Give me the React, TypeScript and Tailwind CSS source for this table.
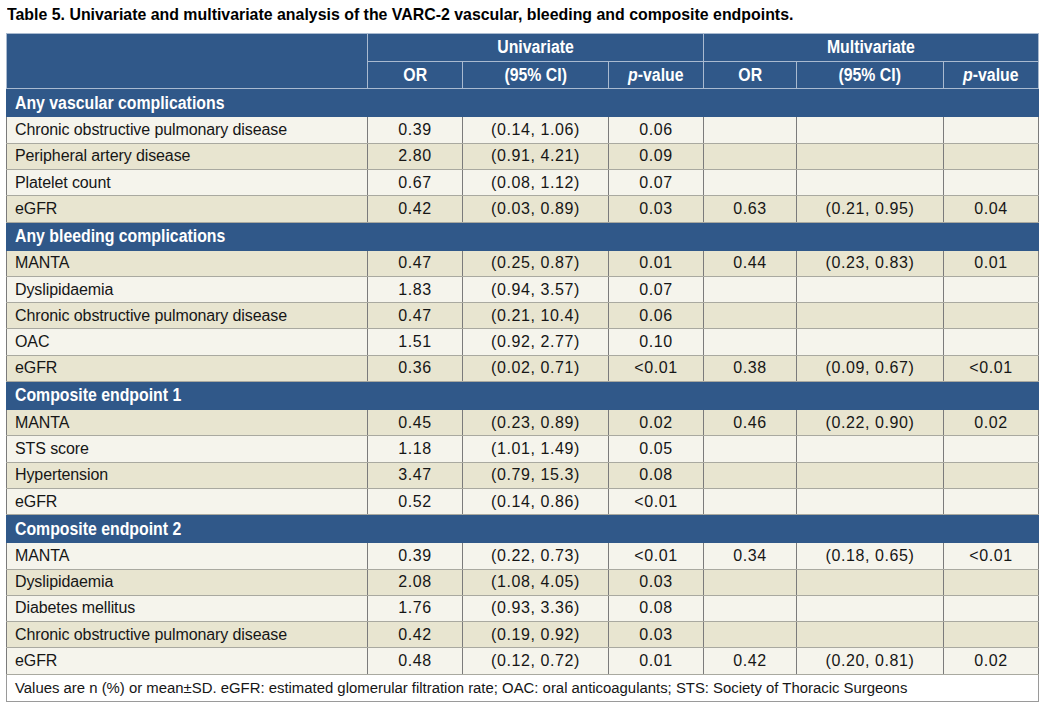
import React from 'react'

type Row = {
  label: string
  u: [string, string, string]
  m?: [string, string, string]
  shade: boolean
}

type Section = {
  title: string
  rows: Row[]
}

const sections: Section[] = [
  {
    title: 'Any vascular complications',
    rows: [
      { label: 'Chronic obstructive pulmonary disease', u: ['0.39', '(0.14, 1.06)', '0.06'], shade: false },
      { label: 'Peripheral artery disease', u: ['2.80', '(0.91, 4.21)', '0.09'], shade: true },
      { label: 'Platelet count', u: ['0.67', '(0.08, 1.12)', '0.07'], shade: false },
      { label: 'eGFR', u: ['0.42', '(0.03, 0.89)', '0.03'], m: ['0.63', '(0.21, 0.95)', '0.04'], shade: true },
    ],
  },
  {
    title: 'Any bleeding complications',
    rows: [
      { label: 'MANTA', u: ['0.47', '(0.25, 0.87)', '0.01'], m: ['0.44', '(0.23, 0.83)', '0.01'], shade: true },
      { label: 'Dyslipidaemia', u: ['1.83', '(0.94, 3.57)', '0.07'], shade: false },
      { label: 'Chronic obstructive pulmonary disease', u: ['0.47', '(0.21, 10.4)', '0.06'], shade: true },
      { label: 'OAC', u: ['1.51', '(0.92, 2.77)', '0.10'], shade: false },
      { label: 'eGFR', u: ['0.36', '(0.02, 0.71)', '<0.01'], m: ['0.38', '(0.09, 0.67)', '<0.01'], shade: true },
    ],
  },
  {
    title: 'Composite endpoint 1',
    rows: [
      { label: 'MANTA', u: ['0.45', '(0.23, 0.89)', '0.02'], m: ['0.46', '(0.22, 0.90)', '0.02'], shade: true },
      { label: 'STS score', u: ['1.18', '(1.01, 1.49)', '0.05'], shade: false },
      { label: 'Hypertension', u: ['3.47', '(0.79, 15.3)', '0.08'], shade: true },
      { label: 'eGFR', u: ['0.52', '(0.14, 0.86)', '<0.01'], shade: false },
    ],
  },
  {
    title: 'Composite endpoint 2',
    rows: [
      { label: 'MANTA', u: ['0.39', '(0.22, 0.73)', '<0.01'], m: ['0.34', '(0.18, 0.65)', '<0.01'], shade: false },
      { label: 'Dyslipidaemia', u: ['2.08', '(1.08, 4.05)', '0.03'], shade: true },
      { label: 'Diabetes mellitus', u: ['1.76', '(0.93, 3.36)', '0.08'], shade: false },
      { label: 'Chronic obstructive pulmonary disease', u: ['0.42', '(0.19, 0.92)', '0.03'], shade: true },
      { label: 'eGFR', u: ['0.48', '(0.12, 0.72)', '0.01'], m: ['0.42', '(0.20, 0.81)', '0.02'], shade: false },
    ],
  },
]

// no condensed face installed, so squeeze the bold sans horizontally
function Narrow({ children, left }: { children: React.ReactNode; left?: boolean }) {
  return (
    <span className={'inline-block whitespace-nowrap scale-x-[0.9] ' + (left ? 'origin-left' : 'origin-center')}>
      {children}
    </span>
  )
}

function PValue() {
  return (
    <Narrow>
      <span className="italic">p</span>-value
    </Narrow>
  )
}

export default function App() {
  const headCell = 'border border-[#a9bad0] text-center font-bold text-white text-[17.6px]'
  const cellBase = 'border-x border-x-[#7b7b7b] border-y border-y-[#a9a9a0] text-[16px] text-[#161616]'
  const numCell = cellBase + ' text-center tracking-[0.6px]'

  return (
    <div className="w-[1045px] h-[704px] bg-white pl-[6px] pt-[5px] [font-family:'Liberation_Sans',Arial,sans-serif]">
      <h1 className="pl-[1px] text-[17px] font-bold leading-[20px] text-black">
        <span className="inline-block whitespace-nowrap origin-left scale-x-[0.935]">
          Table 5. Univariate and multivariate analysis of the VARC-2 vascular, bleeding and composite endpoints.
        </span>
      </h1>
      <table className="mt-[8px] w-[1032px] table-fixed border-collapse">
        <colgroup>
          <col className="w-[361px]" />
          <col className="w-[95px]" />
          <col className="w-[146px]" />
          <col className="w-[95px]" />
          <col className="w-[93px]" />
          <col className="w-[147px]" />
          <col className="w-[95px]" />
        </colgroup>
        <thead>
          <tr className="h-[28px] bg-[#305889]">
            <th rowSpan={2} className={headCell}></th>
            <th colSpan={3} className={headCell}><Narrow>Univariate</Narrow></th>
            <th colSpan={3} className={headCell}><Narrow>Multivariate</Narrow></th>
          </tr>
          <tr className="h-[27px] bg-[#305889]">
            <th className={headCell}><Narrow>OR</Narrow></th>
            <th className={headCell}><Narrow>(95% CI)</Narrow></th>
            <th className={headCell}><PValue /></th>
            <th className={headCell}><Narrow>OR</Narrow></th>
            <th className={headCell}><Narrow>(95% CI)</Narrow></th>
            <th className={headCell}><PValue /></th>
          </tr>
        </thead>
        <tbody>
          {sections.map((s) => (
            <React.Fragment key={s.title}>
              <tr className="h-[28px] bg-[#305889]">
                <td colSpan={7} className="border border-[#305889] pl-[8px] text-left text-[17.6px] font-bold text-white">
                  <Narrow left>{s.title}</Narrow>
                </td>
              </tr>
              {s.rows.map((r, i) => (
                <tr key={i} className={'h-[26.3px] ' + (r.shade ? 'bg-[#e8e5d0]' : 'bg-[#f5f4ec]')}>
                  <td className={cellBase + ' pl-[8px] text-left tracking-[-0.1px]'}>{r.label}</td>
                  <td className={numCell}>{r.u[0]}</td>
                  <td className={numCell}>{r.u[1]}</td>
                  <td className={numCell}>{r.u[2]}</td>
                  <td className={numCell}>{r.m ? r.m[0] : ''}</td>
                  <td className={numCell}>{r.m ? r.m[1] : ''}</td>
                  <td className={numCell}>{r.m ? r.m[2] : ''}</td>
                </tr>
              ))}
            </React.Fragment>
          ))}
          <tr className="h-[27px] bg-white">
            <td colSpan={7} className="border border-[#9a9a9a] pl-[8px] text-left text-[14.9px] text-[#161616]">
              Values are n (%) or mean±SD. eGFR: estimated glomerular filtration rate; OAC: oral anticoagulants; STS: Society of Thoracic Surgeons
            </td>
          </tr>
        </tbody>
      </table>
    </div>
  )
}
